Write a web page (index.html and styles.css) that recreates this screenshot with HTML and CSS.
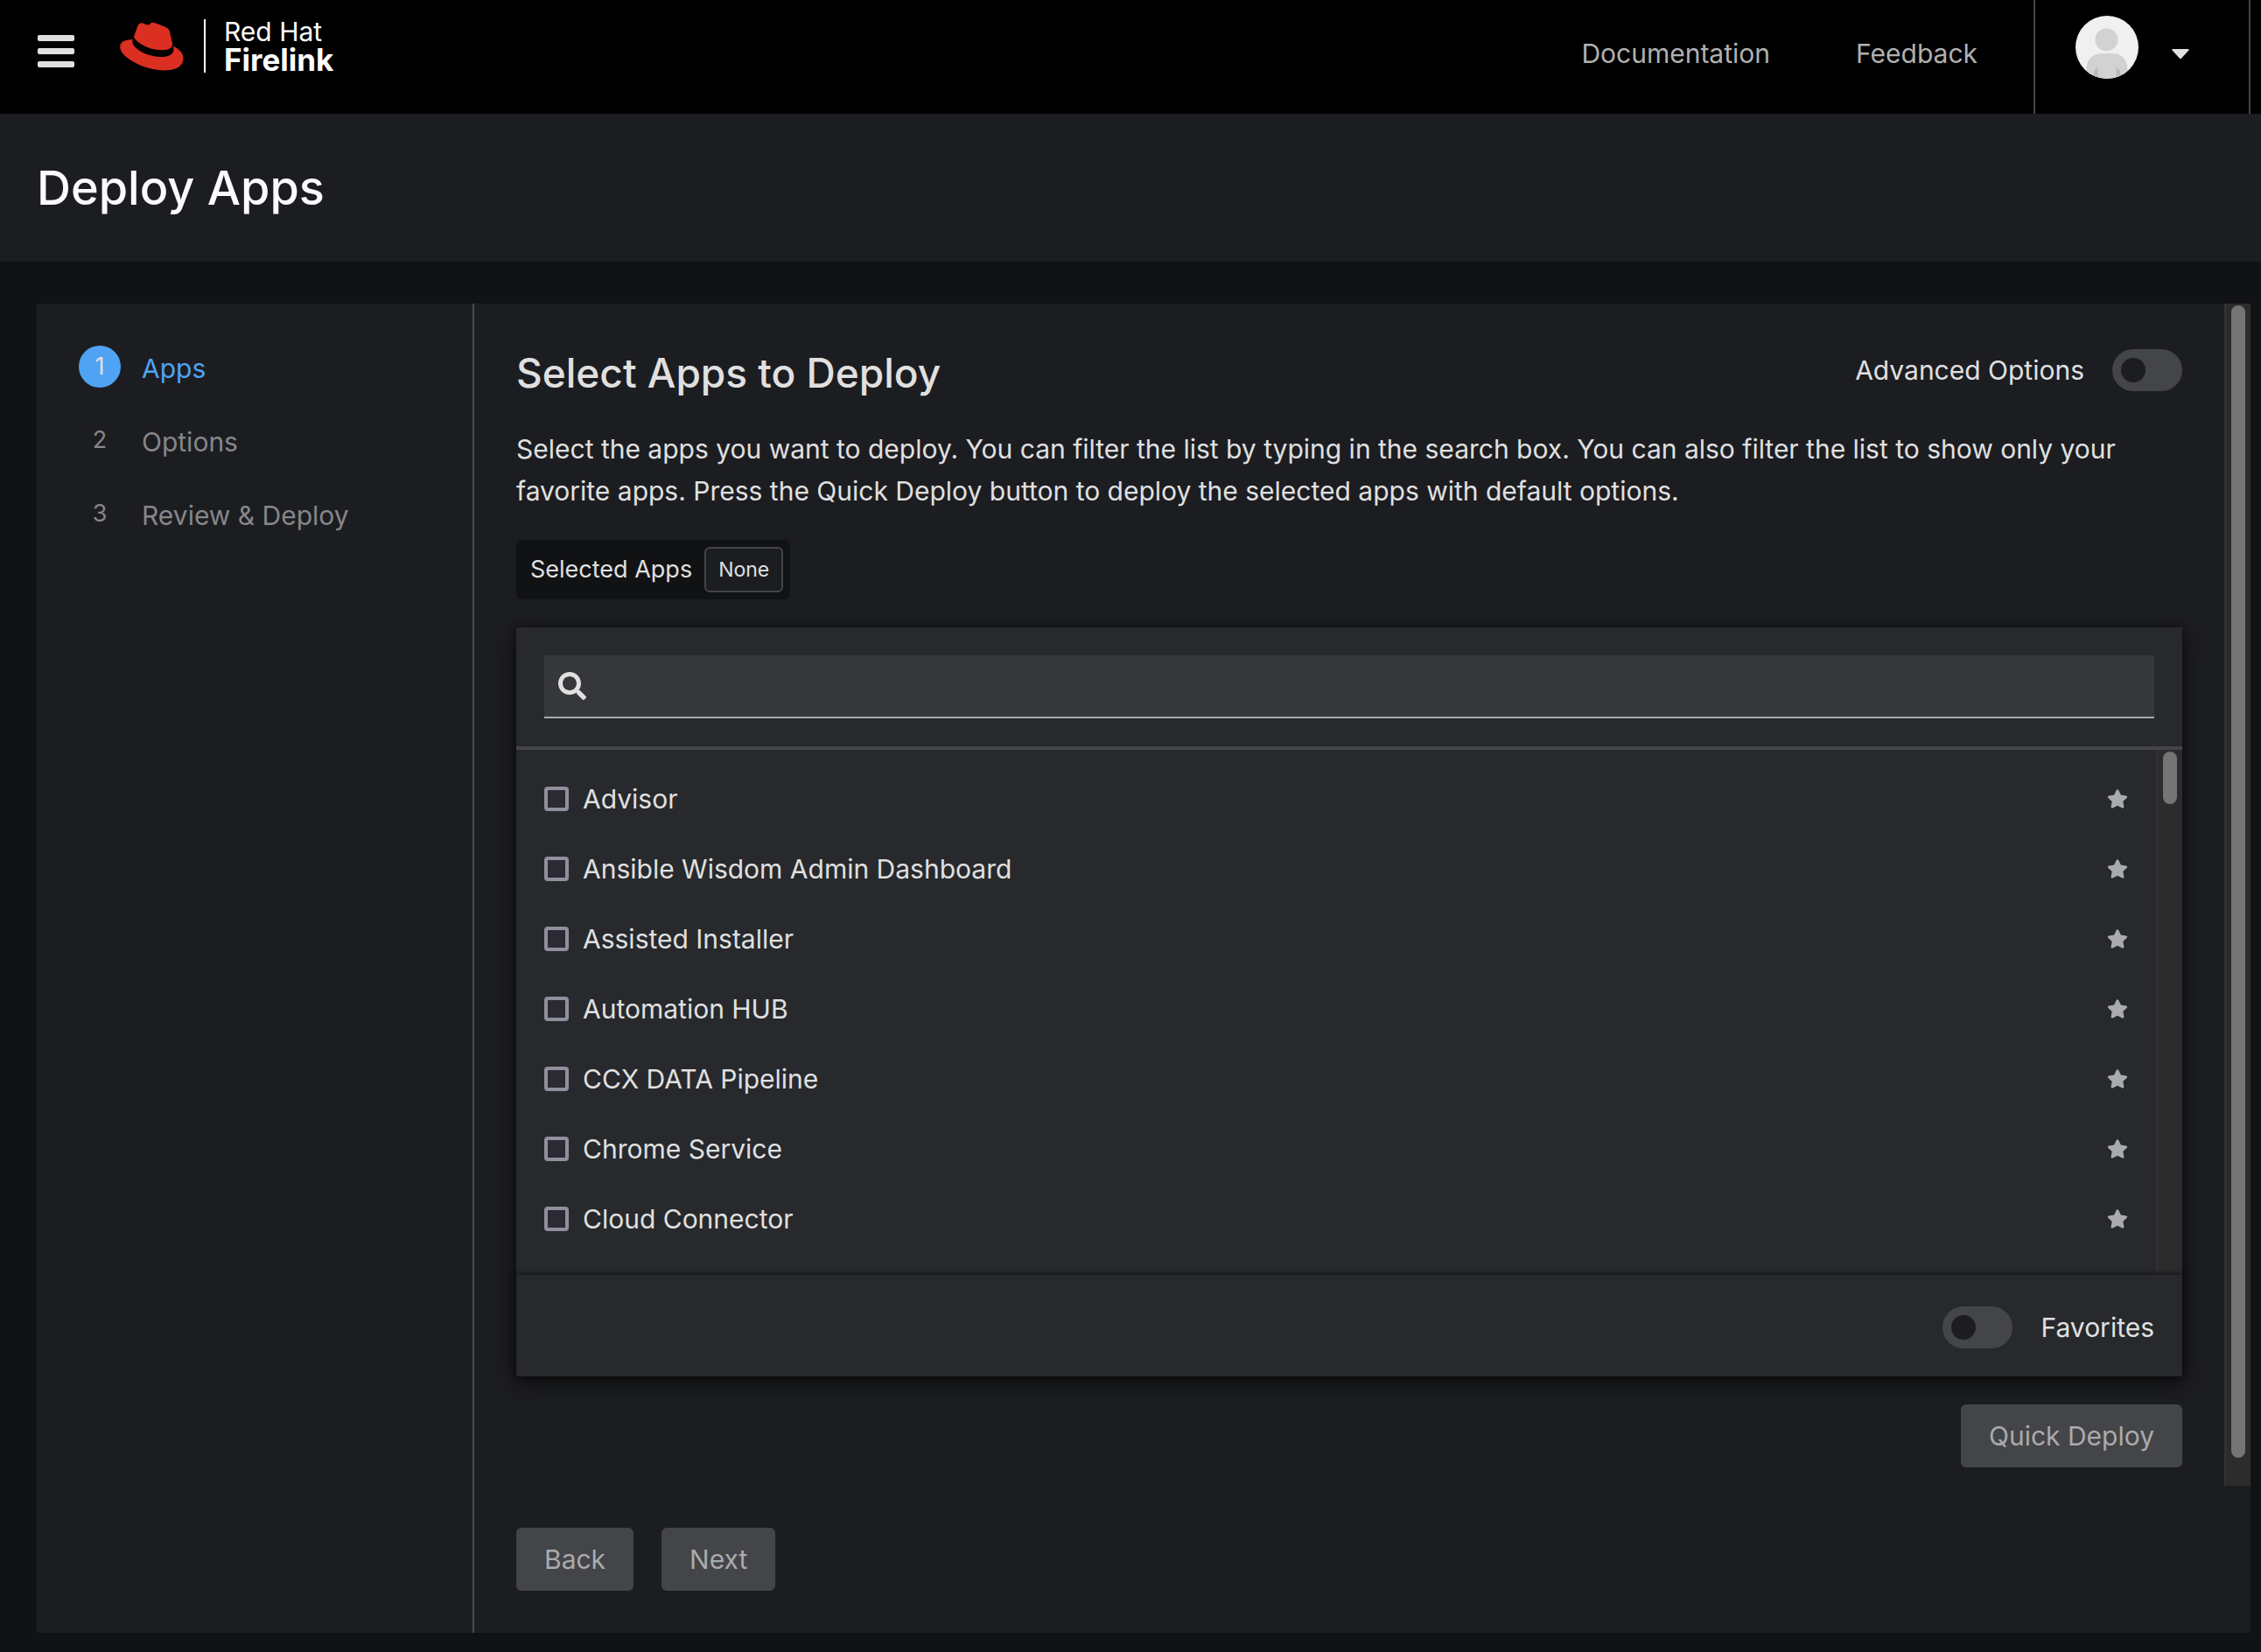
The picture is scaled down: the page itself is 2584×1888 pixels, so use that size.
FILE: index.html
```html
<!DOCTYPE html>
<html lang="en">
<head>
<meta charset="utf-8">
<meta name="viewport" content="width=device-width, initial-scale=1">
<title>Deploy Apps - Red Hat Firelink</title>
<link rel="stylesheet" href="styles.css">
</head>
<body>
<svg width="0" height="0" class="sprite" aria-hidden="true">
  <symbol id="star" viewBox="0 0 576 512"><path d="M259.3 17.8L194 150.2 47.900 171.500c-26.200 3.800-36.700 36.100-17.700 54.600l105.700 103-25 145.500c-4.500 26.300 23.200 46 46.400 33.700L288 439.600l130.700 68.700c23.200 12.200 50.900-7.400 46.400-33.700l-25-145.500 105.700-103c19-18.500 8.500-50.800-17.700-54.600L382 150.200 316.700 17.800c-11.700-23.600-45.600-23.900-57.400 0z"/></symbol>
</svg>
<div class="page">
  <header class="masthead">
    <button class="menu-button" type="button" aria-label="Toggle navigation"><span></span><span></span><span></span></button>
    <a class="brand" href="#">
      <svg class="hat" viewBox="0 0 192 145" aria-hidden="true"><path d="M127.47,83.49c12.51,0,30.61-2.58,30.61-17.46a14,14,0,0,0-.31-3.42l-7.45-32.36c-1.72-7.12-3.23-10.35-15.73-16.6C124.89,8.69,103.76.5,97.51.5,91.69.5,90,8,83.06,8c-6.68,0-11.64-5.6-17.89-5.6-6,0-9.91,4.09-12.93,12.5,0,0-8.41,23.72-9.49,27.16A6.43,6.43,0,0,0,42.53,44c0,9.22,36.3,39.45,84.94,39.45M160,72.07c1.73,8.19,1.73,9.05,1.73,10.13,0,14-15.74,21.77-36.43,21.77C78.54,104,37.58,76.6,37.58,58.49a18.45,18.45,0,0,1,1.51-7.33C22.27,52,.5,55,.5,74.22c0,31.48,74.59,70.28,133.65,70.28,45.28,0,56.7-20.48,56.7-36.65,0-12.72-11-27.16-30.83-35.78"/></svg>
      <span class="brand-text"><span class="brand-top">Red Hat</span><span class="brand-name">Firelink</span></span>
    </a>
    <nav class="top-links" aria-label="Resources">
      <a href="#">Documentation</a>
      <a href="#">Feedback</a>
    </nav>
    <button class="user-menu" type="button" aria-label="User menu">
      <svg class="avatar" viewBox="0 0 36 36" aria-hidden="true">
        <clipPath id="round"><circle cx="18" cy="18" r="18"/></clipPath>
        <g clip-path="url(#round)">
          <rect width="36" height="36" fill="#f0f0f0"/>
          <ellipse cx="17.700" cy="13.700" rx="6.500" ry="6.400" fill="#d2d2d2"/>
          <path d="M6.200 36v-4.500c0-5.500 2.500-9 6.300-9.600 2.700-.5 8.300-.5 11 0 3.800.6 6.300 4.100 6.300 9.600V36z" fill="#d2d2d2"/>
          <path d="M10.500 36v-3.500c0-1.300.8-2.300 2.300-3V36zM25.500 36v-3.500c0-1.300-.8-2.300-2.300-3V36z" fill="#b8bbbe"/>
        </g>
      </svg>
      <svg class="caret" viewBox="0 0 20 11" aria-hidden="true"><path d="M1.500 0h17q1.800 0 .9 1.500l-8.200 8.900q-1.200 1-2.400 0L.6 1.500Q-.3 0 1.500 0z"/></svg>
    </button>
  </header>

  <section class="page-title"><h1>Deploy Apps</h1></section>

  <main class="page-body">
    <div class="wizard">
      <nav class="steps" aria-label="Wizard steps">
        <ol>
          <li><a class="step current" href="#" aria-current="step"><span class="step-number">1</span>Apps</a></li>
          <li><a class="step" href="#"><span class="step-number">2</span>Options</a></li>
          <li><a class="step" href="#"><span class="step-number">3</span>Review &amp; Deploy</a></li>
        </ol>
      </nav>
      <div class="wizard-main">
        <div class="scroll-area">
          <div class="content">
            <div class="content-head">
              <h2>Select Apps to Deploy</h2>
              <label class="switch">Advanced Options<input type="checkbox" role="switch"></label>
            </div>
            <p class="intro">Select the apps you want to deploy. You can filter the list by typing in the search box. You can also filter the list to show only your favorite apps. Press the Quick Deploy button to deploy the selected apps with default options.</p>
            <div class="selected"><span>Selected Apps</span><span class="chip">None</span></div>
            <section class="card" aria-label="Apps">
              <div class="card-search">
                <label class="search">
                  <svg class="search-icon" viewBox="0 0 512 512" aria-hidden="true"><path d="M505 442.700L405.300 343c-4.500-4.500-10.600-7-17-7H372c27.600-35.300 44-79.700 44-128C416 93.100 322.900 0 208 0S0 93.100 0 208s93.100 208 208 208c48.300 0 92.700-16.400 128-44v16.300c0 6.400 2.500 12.500 7 17l99.700 99.700c9.400 9.400 24.600 9.400 33.900 0l28.300-28.300c9.400-9.400 9.400-24.600.1-34zM208 336c-70.700 0-128-57.200-128-128 0-70.700 57.200-128 128-128 70.700 0 128 57.200 128 128 0 70.700-57.200 128-128 128z"/></svg>
                  <input type="search" aria-label="Search apps">
                </label>
              </div>
              <div class="app-list">
                <ul>
                  <li><label><input type="checkbox">Advisor</label><button type="button" class="favorite" aria-label="Favorite Advisor"><svg><use href="#star"/></svg></button></li>
                  <li><label><input type="checkbox">Ansible Wisdom Admin Dashboard</label><button type="button" class="favorite" aria-label="Favorite Ansible Wisdom Admin Dashboard"><svg><use href="#star"/></svg></button></li>
                  <li><label><input type="checkbox">Assisted Installer</label><button type="button" class="favorite" aria-label="Favorite Assisted Installer"><svg><use href="#star"/></svg></button></li>
                  <li><label><input type="checkbox">Automation HUB</label><button type="button" class="favorite" aria-label="Favorite Automation HUB"><svg><use href="#star"/></svg></button></li>
                  <li><label><input type="checkbox">CCX DATA Pipeline</label><button type="button" class="favorite" aria-label="Favorite CCX DATA Pipeline"><svg><use href="#star"/></svg></button></li>
                  <li><label><input type="checkbox">Chrome Service</label><button type="button" class="favorite" aria-label="Favorite Chrome Service"><svg><use href="#star"/></svg></button></li>
                  <li><label><input type="checkbox">Cloud Connector</label><button type="button" class="favorite" aria-label="Favorite Cloud Connector"><svg><use href="#star"/></svg></button></li>
                </ul>
                <div class="track" aria-hidden="true"><div class="thumb thumb-list"></div></div>
              </div>
              <div class="card-footer">
                <label class="switch"><input type="checkbox" role="switch">Favorites</label>
              </div>
            </section>
            <div class="quick"><button type="button" class="btn" disabled>Quick Deploy</button></div>
          </div>
          <div class="track" aria-hidden="true"><div class="thumb thumb-page"></div></div>
        </div>
        <footer class="wizard-footer">
          <button type="button" class="btn" disabled>Back</button>
          <button type="button" class="btn" disabled>Next</button>
        </footer>
      </div>
    </div>
  </main>
</div>
</body>
</html>
```
FILE: styles.css
```css
* { box-sizing: border-box; }

body {
  margin: 0;
  background: #111214;
  color: #e0e0e0;
  font: 400 30px/48px Inter, "Liberation Sans", sans-serif;
}

h1, h2, p, ul, ol { margin: 0; padding: 0; }
ul, ol { list-style: none; }
a { color: inherit; text-decoration: none; }
button, input { font: inherit; color: inherit; }
button { border: 0; padding: 0; background: none; }
.sprite { display: block; }

.page {
  display: flex;
  flex-direction: column;
  min-height: 100vh;
}

/* Masthead */
.masthead {
  display: flex;
  align-items: stretch;
  height: 130px;
  padding: 0 12px 0 43px;
  background: #000;
}

.menu-button {
  display: flex;
  flex-direction: column;
  gap: 8px;
  align-self: flex-start;
  width: 42px;
  margin: 40px 52px 0 0;
}
.menu-button span {
  height: 7px;
  border-radius: 2px;
  background: #e0e0e0;
}

.brand {
  display: flex;
  align-items: flex-start;
  padding-top: 22px;
  color: #fff;
}
.hat {
  width: 73px;
  height: 56px;
  margin-top: 3px;
  fill: #db2f21;
}
.brand-text {
  display: flex;
  flex-direction: column;
  height: 61px;
  margin-left: 23px;
  padding-left: 21px;
  border-left: 2px solid #fff;
}
.brand-top { line-height: 28px; }
.brand-name {
  font-size: 35px;
  font-weight: 700;
  line-height: 36px;
}

.top-links {
  display: flex;
  gap: 98px;
  margin-left: auto;
  padding: 37px 64px 0 0;
  color: #b0b0b0;
}

.user-menu {
  display: flex;
  align-items: flex-start;
  gap: 38px;
  width: 248px;
  padding: 18px 0 0 46px;
  border: solid #444548;
  border-width: 0 2px;
}
.avatar { width: 72px; height: 72px; }
.caret {
  width: 20px;
  height: 11px;
  margin-top: 38px;
  fill: #e0e0e0;
}

/* Page heading */
.page-title {
  height: 169px;
  padding: 48px 42px;
  background: #1c1d21;
}
.page-title h1 {
  color: #fbfbfd;
  font-size: 54px;
  font-weight: 500;
  line-height: 74px;
}

/* Wizard */
.page-body {
  display: flex;
  flex: 1;
  padding: 48px 12px 22px 42px;
}
.wizard {
  display: flex;
  flex: 1;
  background: #1c1d21;
}
.steps {
  flex: none;
  width: 500px;
  padding: 48px;
  border-right: 2px solid #4a4b4e;
}
.steps ol {
  display: flex;
  flex-direction: column;
  gap: 32px;
}
.step {
  display: flex;
  gap: 24px;
  color: #868789;
  line-height: 52px;
}
.step-number {
  width: 48px;
  height: 48px;
  border-radius: 24px;
  font-size: 27px;
  line-height: 48px;
  text-align: center;
}
.step.current { color: #50a3f3; }
.current .step-number { background: #50a3f3; color: #e0e0e0; }

.wizard-main {
  display: flex;
  flex: 1;
  flex-direction: column;
  min-width: 0;
}
.scroll-area { display: flex; }
.content {
  flex: 1;
  min-width: 0;
  padding: 48px 48px 21px;
}
.content-head {
  display: flex;
  justify-content: space-between;
  height: 90px;
}
.content-head h2 {
  font-size: 46px;
  font-weight: 500;
  line-height: 62px;
}
.content-head .switch { margin-top: 4px; }
.intro { padding-top: 4px; }

.switch {
  display: flex;
  align-items: center;
  gap: 32px;
  height: 48px;
}
.switch input {
  appearance: none;
  display: flex;
  width: 80px;
  height: 48px;
  margin: 0;
  padding: 10px;
  border-radius: 24px;
  background: #444548;
}
.switch input::before {
  content: "";
  width: 28px;
  height: 28px;
  border-radius: 50%;
  background: #1c1d21;
}

.selected {
  display: flex;
  align-items: center;
  gap: 14px;
  width: max-content;
  height: 68px;
  margin: 32px 0;
  padding: 0 8px 0 16px;
  border-radius: 6px;
  background: #111214;
  font-size: 27px;
}
.chip {
  padding: 0 14px;
  border: 2px solid #444548;
  border-radius: 6px;
  background: #1c1d21;
  font-size: 23px;
}

/* App picker card */
.card {
  background: #27292c;
  box-shadow: 0 8px 24px rgba(0, 0, 0, .6), 0 0 8px rgba(0, 0, 0, .3);
}
.card-search {
  padding: 32px;
  border-bottom: 4px solid #444548;
}
.search {
  display: flex;
  align-items: center;
  gap: 16px;
  height: 72px;
  padding: 0 16px;
  border-bottom: 2px solid #aaabad;
  background: #36373a;
}
.search-icon { width: 32px; height: 32px; fill: #e0e0e0; }
.search input {
  flex: 1;
  border: 0;
  outline: 0;
  background: none;
}

.app-list {
  display: flex;
  height: 600px;
  overflow: hidden;
}
.app-list ul {
  flex: 1;
  padding: 16px 32px 0;
}
.app-list li {
  display: flex;
  align-items: center;
  justify-content: space-between;
  height: 80px;
}
.app-list label {
  display: flex;
  align-items: center;
  gap: 16px;
}
.app-list input {
  appearance: none;
  width: 28px;
  height: 28px;
  margin: 0;
  border: 4px solid #8f8f9d;
  border-radius: 4px;
  background: #2b2a33;
}
.favorite {
  display: flex;
  justify-content: center;
  width: 24px;
}
.favorite svg { width: 24px; height: 22px; fill: #aaabad; }

.card-footer {
  position: relative;
  display: flex;
  justify-content: flex-end;
  height: 116px;
  padding: 36px 32px 0;
  background: #27292c;
  box-shadow: 0 -2px 6px rgba(0, 0, 0, .5);
}

.track {
  flex: none;
  width: 30px;
  padding: 2px 6px 2px;
  border: solid #333;
  border-width: 0 0 0 2px;
  background: #2c2c2c;
}
.thumb {
  width: 16px;
  border-radius: 8px;
  background: #757575;
}
.thumb-list { height: 60px; }
.thumb-page { height: 1317px; }

.quick {
  display: flex;
  justify-content: flex-end;
  margin-top: 32px;
}
.btn {
  height: 72px;
  padding: 0 32px;
  border-radius: 6px;
  background: #444548;
  color: #aaabad;
}
.wizard-footer {
  display: flex;
  gap: 32px;
  padding: 48px;
}
```
